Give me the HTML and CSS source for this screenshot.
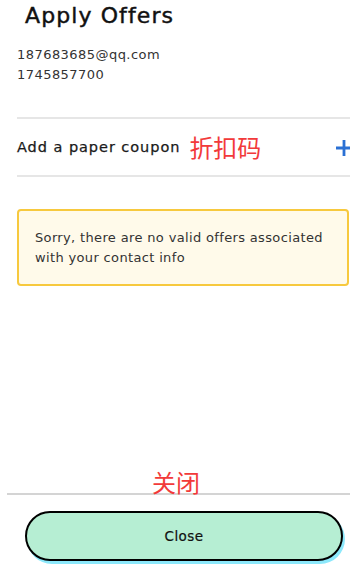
FILE: index.html
```html
<!DOCTYPE html>
<html>
<head>
<meta charset="utf-8">
<link rel="stylesheet" href="styles.css">
</head>
<body>
<div class="page">
  <h1 class="title">Apply Offers</h1>
  <div class="contact">
    <div>187683685@qq.com</div>
    <div>1745857700</div>
  </div>
  <div class="coupon-row">
    <span class="coupon-label">Add a paper coupon</span>
    <span class="note note-coupon">折扣码</span>
    <svg class="plus" width="18" height="18" viewBox="0 0 18 18"><path d="M9 1V17M1 9H17" stroke="#2a70d4" stroke-width="2.8" fill="none"/></svg>
  </div>
  <div class="notice">Sorry, there are no valid offers associated with your contact info</div>
  <div class="spacer"></div>
  <div class="footer">
    <span class="note note-close">关闭</span>
    <div class="btn-wrap"><button class="close-btn">Close</button></div>
  </div>
</div>
</body>
</html>
```
FILE: styles.css
```css
html, body { margin: 0; padding: 0; background: #fff; }
body { font-family: "DejaVu Sans", "Noto Sans CJK SC", sans-serif; color: #1a1a1a; overflow: hidden; }
.page { height: 564px; display: flex; flex-direction: column; }
.title { margin: 0; padding: 2px 0 0 25px; font-size: 22px; font-weight: normal; letter-spacing: 1.1px; line-height: 28px; color: #111; -webkit-text-stroke: 0.45px #111; }
.contact { padding: 15px 0 0 17px; font-size: 13px; letter-spacing: 0.45px; line-height: 20px; color: #333; }
.coupon-row { margin: 32px 0 0 17px; height: 56px; border-top: 2px solid #e6e6e6; border-bottom: 2px solid #e6e6e6; display: flex; align-items: center; position: relative; }
.coupon-label { font-size: 14.5px; letter-spacing: 0.95px; color: #1a1a1a; -webkit-text-stroke: 0.25px #1a1a1a; }
.note { color: #f23a3a; font-family: "Noto Sans CJK SC", sans-serif; font-size: 24px; line-height: 28px; }
.note-coupon { margin-left: 9px; }
.plus { position: absolute; right: -3px; top: 20px; }
.notice { margin: 32px 1px 0 17px; padding: 17px 16px 16px 16px; background: #fffaea; border: 2px solid #f7c93e; border-radius: 4px; font-size: 13px; letter-spacing: 0.35px; line-height: 20px; color: #333; }
.spacer { flex: 1; }
.footer { position: relative; margin-left: 7px; border-top: 2px solid #d4d4d4; padding: 16px 7px 3px 18px; }
.note-close { position: absolute; left: 145px; top: -27px; }
.close-btn { display: block; width: 100%; height: 50px; border: 2px solid #000; border-radius: 25px; background: #b6eed3; box-shadow: 2px 3px 0 #8ce8fb; font-family: inherit; font-size: 13.5px; letter-spacing: 0.4px; color: #111; -webkit-text-stroke: 0.2px #111; }
```
